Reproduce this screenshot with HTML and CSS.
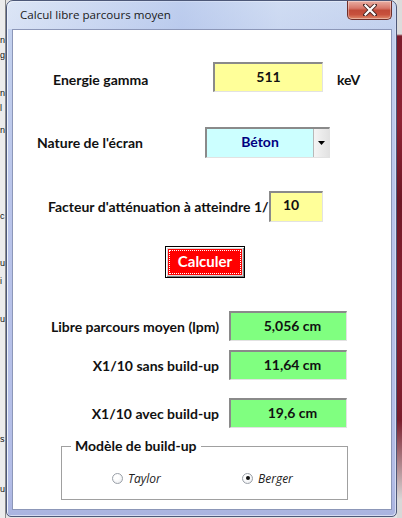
FILE: index.html
```html
<!DOCTYPE html>
<html lang="fr">
<head>
<meta charset="utf-8">
<title>Calcul libre parcours moyen</title>
<link rel="stylesheet" href="styles.css">
</head>
<body>
<div class="screen">
  <div class="bg-left">
    <div class="frag f1">n</div>
    <div class="frag f2">g</div>
    <div class="frag f3">n</div>
    <div class="frag f4">l</div>
    <div class="frag f5">n</div>
    <div class="frag f6">c</div>
    <div class="frag f7">u</div>
    <div class="frag f8">i</div>
    <div class="frag f9">u</div>
    <div class="frag f10">s</div>
    <div class="frag f11">u</div>
  </div>
  <div class="window">
    <div class="titlebar">
      <span class="title">Calcul libre parcours moyen</span>
      <div class="close">
        <svg width="14" height="12" viewBox="0 0 14 12">
          <path d="M2 1 L12 11 M12 1 L2 11" stroke="#4a2a28" stroke-width="4" stroke-linecap="square"/>
          <path d="M2.5 1.5 L11.5 10.5 M11.5 1.5 L2.5 10.5" stroke="#ffffff" stroke-width="2.2" stroke-linecap="square"/>
        </svg>
      </div>
    </div>
    <div class="client">
      <div class="row row-energy">
        <span class="label lbl-energy">Energie gamma</span>
        <div class="field yellow w-energy">511</div>
        <span class="unit">keV</span>
      </div>
      <div class="row row-screen">
        <span class="label lbl-screen">Nature de l'écran</span>
        <div class="combo">
          <div class="combo-value">Béton</div>
          <div class="combo-btn">
            <svg width="7" height="4" viewBox="0 0 7 4"><path d="M0 0 H7 L3.5 4 Z" fill="#000"/></svg>
          </div>
        </div>
      </div>
      <div class="row row-factor">
        <span class="label lbl-factor">Facteur d'atténuation à atteindre 1/</span>
        <div class="field yellow w-factor left">10</div>
      </div>
      <div class="row row-button">
        <button class="calc"><span class="calc-inner">Calculer</span></button>
      </div>
      <div class="row result r1">
        <span class="label rlabel">Libre parcours moyen (lpm)</span>
        <div class="field green w-result">5,056 cm</div>
      </div>
      <div class="row result r2">
        <span class="label rlabel">X1/10 sans build-up</span>
        <div class="field green w-result">11,64 cm</div>
      </div>
      <div class="row result r3">
        <span class="label rlabel">X1/10 avec build-up</span>
        <div class="field green w-result">19,6 cm</div>
      </div>
      <fieldset class="group">
        <legend>Modèle de build-up</legend>
        <div class="radios">
          <div class="opt opt1"><span class="radio"></span><span class="rtext">Taylor</span></div>
          <div class="opt"><span class="radio checked"></span><span class="rtext">Berger</span></div>
        </div>
      </fieldset>
    </div>
  </div>
  <div class="bg-right"></div>
</div>
</body>
</html>
```
FILE: styles.css
```css
* { box-sizing: border-box; }
html, body { margin: 0; padding: 0; }
body {
  width: 402px;
  height: 518px;
  overflow: hidden;
  font-family: Lato, "Open Sans", sans-serif;
  color: #111;
}
.screen {
  display: flex;
  width: 402px;
  height: 518px;
  background: #e4e4e4;
}
.bg-left {
  width: 6px;
  flex: 0 0 6px;
  background: #ececec;
  border-right: 1px solid #8a8a8a;
  overflow: hidden;
  display: flex;
  flex-direction: column;
  font-family: "Liberation Sans", sans-serif;
  font-size: 9px;
  line-height: 14px;
}
.frag { width: 5px; white-space: nowrap; }
.f1 { margin-top: 33px; }
.f2 { margin-top: 1px; }
.f3 { margin-top: 24px; }
.f4 { margin-top: 1px; }
.f5 { margin-top: 8px; }
.f6 { margin-top: 72px; }
.f7 { margin-top: 33px; }
.f8 { margin-top: 4px; }
.f9 { margin-top: 24px; }
.f10 { margin-top: 106px; }
.f11 { margin-top: 36px; }

.window {
  width: 391px;
  flex: 0 0 391px;
  height: 517px;
  border: 1px solid #4d5878;
  border-radius: 7px 7px 5px 5px;
  padding: 0 4px 6px 5px;
  display: flex;
  flex-direction: column;
  background: linear-gradient(180deg, #cddaf1 0px, #c3d1ee 30px, #b9c4ea 200px, #b3bde7 480px, #a9b3df 517px);
  box-shadow: inset 1px 1px 0 #eef3fb, inset -1px -1px 0 #d6dcf2;
}
.titlebar {
  height: 28px;
  flex: 0 0 28px;
  display: flex;
  align-items: flex-start;
  background: linear-gradient(90deg, rgba(230,237,249,0.6), rgba(178,196,236,0.55) 45%, rgba(210,222,244,0.5) 70%, rgba(190,205,238,0.3));
  margin: 0 -4px 0 -5px;
  padding: 0 4px 0 5px;
  border-radius: 6px 6px 0 0;
}
.title {
  font-family: "Open Sans", "Noto Sans", sans-serif;
  font-size: 11.6px;
  color: #1a1a1a;
  margin-left: 8px;
  margin-top: 6px;
  line-height: 16px;
}
.close {
  margin-left: auto;
  width: 45px;
  height: 19px;
  border: 1px solid #6f2f2a;
  border-top: none;
  border-radius: 0 0 5px 5px;
  background: linear-gradient(180deg, #e9aea3 0%, #d6776a 40%, #c14a38 52%, #c8513d 75%, #e08a6c 100%);
  display: flex;
  align-items: center;
  justify-content: center;
  box-shadow: inset 0 0 0 1px rgba(255,255,255,0.35);
}
.client {
  flex: 1;
  background: #ffffff;
  border: 1px solid #8c97b8;
  display: flex;
  flex-direction: column;
}
.row {
  display: flex;
  align-items: center;
}
.label {
  font-weight: 700;
  font-size: 14px;
  white-space: nowrap;
}
.field {
  height: 100%;
  border-top: 2px solid #8a8a8a;
  border-left: 2px solid #8a8a8a;
  border-right: 1px solid #e2e2e2;
  border-bottom: 1px solid #e2e2e2;
  font-weight: 700;
  font-size: 14px;
  display: flex;
  align-items: center;
  justify-content: center;
  padding-bottom: 3px;
}
.yellow { background: #ffff99; }
.green { background: #80ff80; padding-left: 8px; }
.left { justify-content: flex-start; padding-left: 12px; }

.row-energy { margin-top: 32px; height: 30px; padding-left: 40px; }
.lbl-energy { width: 160px; padding-top: 4px; }
.w-energy { width: 110px; }
.unit { margin-left: 14px; font-weight: 700; font-size: 14px; padding-top: 4px; }

.row-screen { margin-top: 35px; height: 31px; padding-left: 24px; }
.lbl-screen { width: 168px; }
.combo {
  width: 125px;
  height: 31px;
  display: flex;
  border-top: 2px solid #8a8a8a;
  border-left: 2px solid #8a8a8a;
  border-right: 1px solid #e2e2e2;
  border-bottom: 1px solid #e2e2e2;
}
.combo-value {
  flex: 1;
  background: #ccffff;
  color: #000080;
  font-weight: 700;
  font-size: 14px;
  display: flex;
  align-items: center;
  justify-content: center;
  padding-bottom: 4px;
}
.combo-btn {
  width: 16px;
  background: linear-gradient(90deg, #f4f4f4, #e2e2e2);
  border-left: 1px solid #b8b8b8;
  display: flex;
  align-items: center;
  justify-content: center;
}

.row-factor { margin-top: 33px; height: 31px; padding-left: 35px; }
.lbl-factor { width: 221px; }
.w-factor { width: 54px; padding-bottom: 6px; }

.row-button { margin-top: 24px; height: 32px; padding-left: 152px; }
.calc {
  width: 80px;
  height: 32px;
  margin: 0;
  padding: 1px;
  border: 1px solid #000;
  background: #d8d8d8;
  box-shadow: inset 1px 1px 0 #ffffff, inset -1px -1px 0 #808080;
  display: flex;
  cursor: pointer;
}
.calc-inner {
  flex: 1;
  margin: 1px;
  background: #ff0000;
  outline: 1px dotted #ffffff;
  outline-offset: -2px;
  color: #ffffff;
  font-family: Lato, "Open Sans", sans-serif;
  font-weight: 700;
  font-size: 15px;
  display: flex;
  align-items: center;
  justify-content: center;
  padding-bottom: 2px;
}

.result { height: 30px; }
.rlabel { width: 206px; text-align: right; }
.w-result { width: 118px; margin-left: 10px; }
.r1 { margin-top: 33px; }
.r2 { margin-top: 9px; }
.r3 { margin-top: 18px; }

.group {
  margin: 10px 0 0 48px;
  width: 287px;
  height: 62px;
  border: 1px solid #a0a0a0;
  padding: 0 0 0 9px;
  min-width: 0;
}
.group legend {
  padding: 0 4px;
  font-weight: 700;
  font-size: 14px;
  line-height: 16px;
}
.radios {
  display: flex;
  align-items: center;
  margin-top: 18px;
  height: 12px;
}
.opt { display: flex; align-items: center; }
.opt1 { margin-left: 41px; width: 130px; }
.radio {
  width: 11px;
  height: 11px;
  border-radius: 50%;
  border: 1px solid #9aa0a8;
  background: radial-gradient(circle at 40% 35%, #ffffff 30%, #e4e6ea 100%);
  display: flex;
  align-items: center;
  justify-content: center;
}
.radio.checked::after {
  content: "";
  width: 4px;
  height: 4px;
  border-radius: 50%;
  background: #111;
}
.rtext {
  margin-left: 5px;
  font-family: "Open Sans", sans-serif;
  font-style: italic;
  font-size: 12px;
  color: #222;
}

.bg-right {
  flex: 1;
  background: linear-gradient(180deg, #dcdcdc 0px, #dcdcdc 34px, #7c1c2c 36px, #8e2334 120px, #6d1826 200px, #8a2232 300px, #7a1d2c 420px, #d8d8d8 500px);
}
```
